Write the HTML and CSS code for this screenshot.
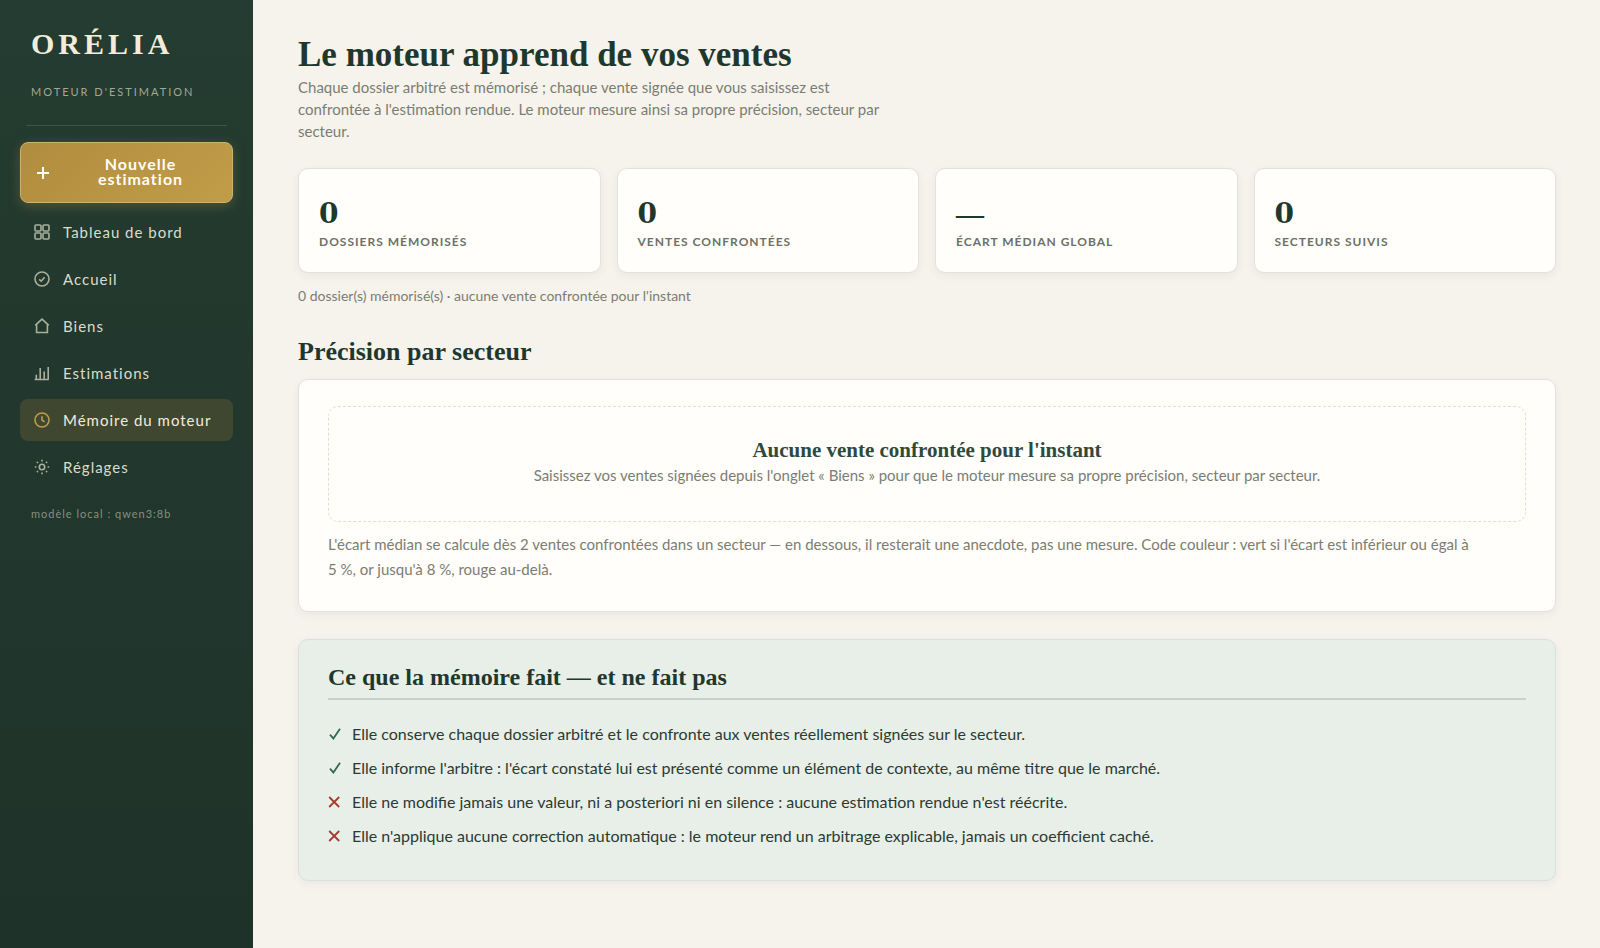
FILE: index.html
```html
<!DOCTYPE html>
<html lang="fr">
<head>
    <meta charset="UTF-8">
    <meta name="viewport" content="width=device-width, initial-scale=1.0">
    <title>Orélia - Mémoire du moteur</title>
    <link rel="stylesheet" href="styles.css">
</head>
<body>
    <aside class="sidebar">
        <div class="brand">
            <div class="brand-name">ORÉLIA</div>
            <div class="brand-sub">MOTEUR D'ESTIMATION</div>
        </div>
        <button type="button" class="new-btn">
            <svg viewBox="0 0 16 16"><path d="M8 2v12M2 8h12"/></svg>
            <span>Nouvelle estimation</span>
        </button>
        <nav class="nav">
            <a href="#tableau">
                <svg viewBox="0 0 16 16"><rect x="1" y="1" width="6" height="6" rx="1"/><rect x="9" y="1" width="6" height="6" rx="1"/><rect x="1" y="9" width="6" height="6" rx="1"/><rect x="9" y="9" width="6" height="6" rx="1"/></svg>
                Tableau de bord
            </a>
            <a href="#accueil">
                <svg viewBox="0 0 16 16"><circle cx="8" cy="8" r="7"/><path d="M5.2 8.4l2 1.8 3.4-4"/></svg>
                Accueil
            </a>
            <a href="#biens">
                <svg viewBox="0 0 16 16"><path d="M1.2 7.4L8 1.2l6.8 6.2M2.6 6.4v8.1h10.8V6.4"/></svg>
                Biens
            </a>
            <a href="#estimations">
                <svg viewBox="0 0 16 16"><path d="M.6 14.5h14.2M2.3 14.5V9.8M6.2 14.5V3M10.2 14.5V6.5M14.2 14.5V2"/></svg>
                Estimations
            </a>
            <a href="#memoire" class="active">
                <svg viewBox="0 0 16 16"><circle cx="8" cy="8" r="7"/><path d="M8 4.2V8l2.6 1.8"/></svg>
                Mémoire du moteur
            </a>
            <a href="#reglages">
                <svg viewBox="0 0 16 16"><circle cx="8" cy="8" r="2.7"/><path d="M8 .8v1.6M8 13.6v1.6M.8 8h1.6M13.6 8h1.6M2.9 2.9l1.1 1.1M12 12l1.1 1.1M2.9 13.1L4 12M12 4l1.1-1.1"/></svg>
                Réglages
            </a>
        </nav>
        <div class="model">modèle local : qwen3:8b</div>
    </aside>

    <main class="content">
        <h1>Le moteur apprend de vos ventes</h1>
        <p class="intro">Chaque dossier arbitré est mémorisé ; chaque vente signée que vous saisissez est confrontée à l'estimation rendue. Le moteur mesure ainsi sa propre précision, secteur par secteur.</p>

        <div class="stats">
            <div class="stat">
                <div class="stat-value">0</div>
                <div class="stat-label">DOSSIERS MÉMORISÉS</div>
            </div>
            <div class="stat">
                <div class="stat-value">0</div>
                <div class="stat-label">VENTES CONFRONTÉES</div>
            </div>
            <div class="stat">
                <div class="stat-value no-value">—</div>
                <div class="stat-label">ÉCART MÉDIAN GLOBAL</div>
            </div>
            <div class="stat">
                <div class="stat-value">0</div>
                <div class="stat-label">SECTEURS SUIVIS</div>
            </div>
        </div>
        <p class="summary">0 dossier(s) mémorisé(s) · aucune vente confrontée pour l'instant</p>

        <h2>Précision par secteur</h2>
        <section class="card">
            <div class="empty">
                <h3>Aucune vente confrontée pour l'instant</h3>
                <p>Saisissez vos ventes signées depuis l'onglet « Biens » pour que le moteur mesure sa propre précision, secteur par secteur.</p>
            </div>
            <p class="note">L'écart médian se calcule dès 2 ventes confrontées dans un secteur — en dessous, il resterait une anecdote, pas une mesure. Code couleur : vert si l'écart est inférieur ou égal à <br>5&nbsp;%, or jusqu'à 8&nbsp;%, rouge au-delà.</p>
        </section>

        <section class="card card-green">
            <h2>Ce que la mémoire fait — et ne fait pas</h2>
            <ul class="rules">
                <li>
                    <svg class="yes" viewBox="0 0 14 14"><path d="M2 7.6l3.4 4L12 1.8"/></svg>
                    Elle conserve chaque dossier arbitré et le confronte aux ventes réellement signées sur le secteur.
                </li>
                <li>
                    <svg class="yes" viewBox="0 0 14 14"><path d="M2 7.6l3.4 4L12 1.8"/></svg>
                    Elle informe l'arbitre : l'écart constaté lui est présenté comme un élément de contexte, au même titre que le marché.
                </li>
                <li>
                    <svg class="no" viewBox="0 0 14 14"><path d="M1.2 2l10 10M11.2 2l-10 10"/></svg>
                    Elle ne modifie jamais une valeur, ni a posteriori ni en silence : aucune estimation rendue n'est réécrite.
                </li>
                <li>
                    <svg class="no" viewBox="0 0 14 14"><path d="M1.2 2l10 10M11.2 2l-10 10"/></svg>
                    Elle n'applique aucune correction automatique : le moteur rend un arbitrage explicable, jamais un coefficient caché.
                </li>
            </ul>
        </section>
    </main>
</body>
</html>
```
FILE: styles.css
```css
* {
    box-sizing: border-box;
}

body {
    margin: 0;
    min-height: 100vh;
    display: flex;
    background: #f6f3ec;
    color: #2b3a33;
    font-family: Lato, "Liberation Sans", sans-serif;
    font-size: 15px;
}

h1, h2, h3, p, ul {
    margin: 0;
}

h1, h2, h3 {
    font-family: "Liberation Serif", serif;
    font-weight: 700;
    color: #1f382e;
}

svg {
    fill: none;
    stroke: currentColor;
    flex-shrink: 0;
}

/* sidebar */
.sidebar {
    width: 253px;
    flex-shrink: 0;
    padding: 26px 20px;
    background: linear-gradient(180deg, #243c31, #1f3229);
}

.brand {
    margin: 0 6px 16px;
    padding: 0 5px 25px;
    border-bottom: 1px solid #3d5548;
}

.brand-name {
    font-family: "Liberation Serif", serif;
    font-size: 30px;
    font-weight: 700;
    line-height: 36px;
    letter-spacing: 4px;
    color: #f2ecda;
}

.brand-sub {
    margin-top: 22px;
    font-size: 11px;
    line-height: 16px;
    letter-spacing: 2px;
    color: #a3a791;
}

.new-btn {
    display: flex;
    align-items: center;
    gap: 12px;
    width: 100%;
    height: 61px;
    padding: 0 14px;
    border: 1px solid #cdb36b;
    border-radius: 8px;
    background: linear-gradient(135deg, #b08d3e, #c19d49);
    box-shadow: 0 3px 12px rgba(176, 141, 62, 0.35);
    color: #fffdf8;
    font-family: inherit;
    font-size: 16px;
    font-weight: 700;
    line-height: 15px;
    letter-spacing: 1px;
    cursor: pointer;
}

.new-btn svg {
    width: 16px;
    height: 16px;
    stroke-width: 2;
}

.new-btn span {
    flex: 1;
    padding: 0 12px 3px;
}

.nav {
    display: flex;
    flex-direction: column;
    gap: 5px;
    margin-top: 8px;
}

.nav a {
    display: flex;
    align-items: center;
    gap: 13px;
    height: 42px;
    padding: 0 14px;
    border-radius: 8px;
    color: #dcdcc9;
    letter-spacing: 1px;
    text-decoration: none;
    white-space: nowrap;
}

.nav svg {
    width: 16px;
    height: 16px;
    stroke-width: 1.6;
    color: #a9b09c;
}

.nav .active {
    background: #404731;
    color: #f2ecda;
}

.nav .active svg {
    color: #bd9c48;
}

.model {
    margin: 18px 11px 0;
    font-size: 11px;
    line-height: 16px;
    letter-spacing: 1px;
    color: #87907d;
}

/* main column */
.content {
    flex: 1;
    min-width: 0;
    padding: 36px 44px 60px 45px;
}

h1 {
    font-size: 35px;
    line-height: 38px;
}

h2 {
    font-size: 26px;
    line-height: 30px;
}

.intro {
    max-width: 600px;
    margin-top: 2px;
    line-height: 22px;
    color: #7b7d72;
}

.stats {
    display: grid;
    grid-template-columns: repeat(4, 1fr);
    gap: 16px;
    margin-top: 26px;
}

.stat {
    padding: 27px 20px 20px;
    border: 1px solid #e2e1da;
    border-radius: 10px;
    background: #fffefa;
    box-shadow: 0 3px 10px rgba(31, 56, 46, 0.06);
}

.stat-value {
    font-family: "DejaVu Serif", serif;
    font-size: 28px;
    font-weight: 700;
    line-height: 36px;
    color: #1f382e;
}

.no-value {
    font-family: "Liberation Serif", serif;
}

.stat-label {
    font-size: 12px;
    font-weight: 700;
    line-height: 20px;
    letter-spacing: 1px;
    color: #6d7067;
}

.summary {
    margin: 13px 0 31px;
    font-size: 14px;
    line-height: 20px;
    color: #7b7d72;
}

.card {
    margin-top: 12px;
    padding: 26px 29px 29px;
    border: 1px solid #e2e1da;
    border-radius: 10px;
    background: #fffefa;
    box-shadow: 0 3px 10px rgba(31, 56, 46, 0.06);
}

.empty {
    padding: 31px 20px 33px;
    border: 1px dashed #e5dcd6;
    border-radius: 10px;
    text-align: center;
}

.empty h3 {
    font-size: 21px;
    line-height: 25px;
    color: #2f4a3d;
}

.empty p {
    line-height: 25px;
    color: #7b7d72;
}

.note {
    margin-top: 10px;
    line-height: 25px;
    color: #7b7d72;
}

.card-green {
    margin-top: 27px;
    padding: 22px 29px 27px;
    background: #e8efe8;
    border-color: #d8e2d9;
}

.card-green h2 {
    padding-bottom: 6px;
    border-bottom: 2px solid #c8d1c9;
    font-size: 24px;
}

.rules {
    display: flex;
    flex-direction: column;
    gap: 8px;
    padding: 21px 0 4px;
    list-style: none;
}

.rules li {
    display: flex;
    align-items: center;
    gap: 10px;
    font-size: 16px;
    line-height: 26px;
}

.rules svg {
    width: 14px;
    height: 14px;
    stroke-width: 1.8;
}

.yes {
    color: #2f6b4c;
}

.no {
    color: #a63a30;
}
```
